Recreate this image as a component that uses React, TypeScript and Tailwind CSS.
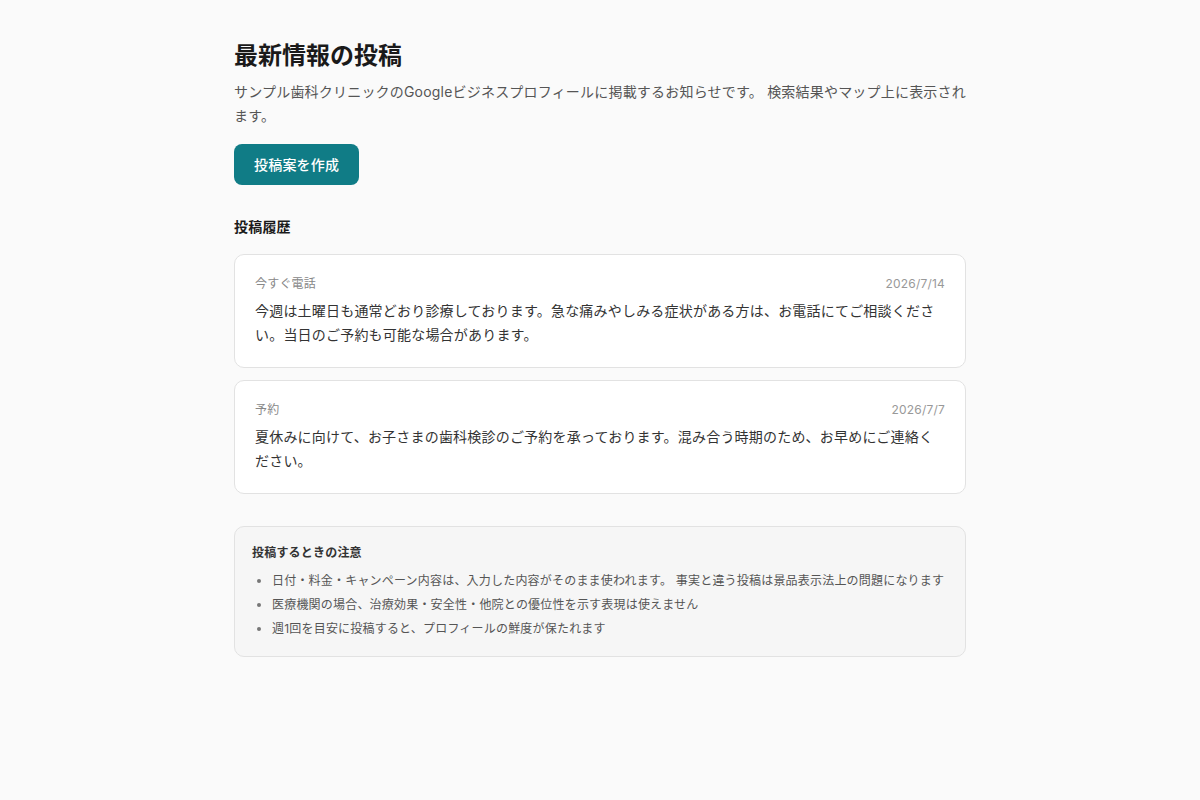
const posts = [
  {
    label: '今すぐ電話',
    date: '2026/7/14',
    body: '今週は土曜日も通常どおり診療しております。急な痛みやしみる症状がある方は、お電話にてご相談ください。当日のご予約も可能な場合があります。',
  },
  {
    label: '予約',
    date: '2026/7/7',
    body: '夏休みに向けて、お子さまの歯科検診のご予約を承っております。混み合う時期のため、お早めにご連絡ください。',
  },
];

const notes = [
  '日付・料金・キャンペーン内容は、入力した内容がそのまま使われます。 事実と違う投稿は景品表示法上の問題になります',
  '医療機関の場合、治療効果・安全性・他院との優位性を示す表現は使えません',
  '週1回を目安に投稿すると、プロフィールの鮮度が保たれます',
];

export default function App() {
  return (
    <div className="min-h-screen bg-[#fafafa] font-['Inter','Noto_Sans_CJK_JP',sans-serif] tracking-[0.2px]">
      <div className="mx-auto max-w-[732px] pt-10 pb-16">
        <h1 className="text-2xl leading-8 font-bold tracking-normal text-[#1a1a1a]">最新情報の投稿</h1>
        <p className="mt-2 text-sm leading-6 text-[#555]">
          サンプル歯科クリニックのGoogleビジネスプロフィールに掲載するお知らせです。 検索結果やマップ上に表示されます。
        </p>
        <button className="mt-4 rounded-lg bg-[#107c86] px-5 py-2.5 text-sm leading-[21px] font-medium text-white">
          投稿案を作成
        </button>

        <h2 className="mt-8 text-sm leading-5 font-bold text-[#1a1a1a]">投稿履歴</h2>
        <div className="mt-[17px] flex flex-col gap-3">
          {posts.map((p) => (
            <div key={p.date} className="rounded-[10px] border border-[#e2e2e2] bg-white px-5 pt-5 pb-5">
              <div className="flex items-center justify-between text-xs leading-[18px]">
                <span className="text-[#888]">{p.label}</span>
                <span className="text-[#999]">{p.date}</span>
              </div>
              <p className="mt-1.5 text-sm leading-6 text-[#333]">{p.body}</p>
            </div>
          ))}
        </div>

        <div className="mt-8 rounded-[10px] border border-[#e2e2e2] bg-[#f6f6f6] px-[17px] pt-[17px] pb-[17px]">
          <h3 className="text-xs leading-[18px] font-semibold text-[#333]">投稿するときの注意</h3>
          <ul className="mt-[9px] list-disc space-y-1 pl-5 text-xs leading-5 text-[#555] marker:text-[#777]">
            {notes.map((n) => (
              <li key={n}>{n}</li>
            ))}
          </ul>
        </div>
      </div>
    </div>
  );
}
